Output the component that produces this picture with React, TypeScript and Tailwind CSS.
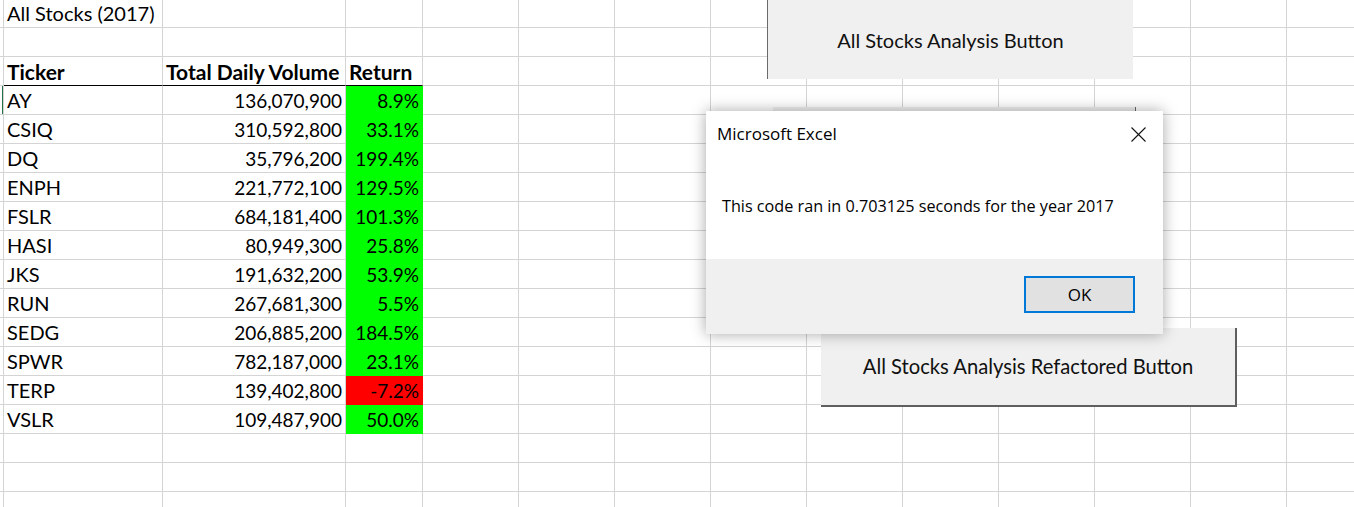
import React from "react";

type DataRow = { t: string; v: string; r: string; red?: boolean };

const DATA: DataRow[] = [
  { t: "AY", v: "136,070,900", r: "8.9%" },
  { t: "CSIQ", v: "310,592,800", r: "33.1%" },
  { t: "DQ", v: "35,796,200", r: "199.4%" },
  { t: "ENPH", v: "221,772,100", r: "129.5%" },
  { t: "FSLR", v: "684,181,400", r: "101.3%" },
  { t: "HASI", v: "80,949,300", r: "25.8%" },
  { t: "JKS", v: "191,632,200", r: "53.9%" },
  { t: "RUN", v: "267,681,300", r: "5.5%" },
  { t: "SEDG", v: "206,885,200", r: "184.5%" },
  { t: "SPWR", v: "782,187,000", r: "23.1%" },
  { t: "TERP", v: "139,402,800", r: "-7.2%", red: true },
  { t: "VSLR", v: "109,487,900", r: "50.0%" },
];

const EXTRA = Array.from({ length: 10 }, (_, i) => i);
const ROWS = Array.from({ length: 18 }, (_, i) => i);

const cellFont = { fontFamily: "Lato, 'Liberation Sans', sans-serif" };
const uiFont = { fontFamily: "'Open Sans', 'Noto Sans', sans-serif" };

function GridRow({ r }: { r: number }) {
  const h = r === 0 ? "h-[28px]" : "h-[29px]";
  const isHeader = r === 2;
  const d = r >= 3 && r <= 14 ? DATA[r - 3] : null;
  const headBorder = isHeader ? "border-b-black" : "";
  const cBg = d ? (d.red ? "bg-[#ff0000] border-[#ff0000]" : "bg-[#00ff00] border-[#00ff00]") : "border-[#d4d4d4]";
  return (
    <div className={`flex shrink-0 ${h}`}>
      <div className={`relative w-[4px] shrink-0 border-r border-b border-[#d4d4d4] ${h}`}>
        {r === 3 && <div className="absolute left-[2px] top-0 bottom-0 w-[1px] bg-[#217346]" />}
      </div>
      <div
        className={`w-[159px] shrink-0 border-r border-b border-[#d4d4d4] ${headBorder} flex items-end pl-[3px] pb-[2px] whitespace-nowrap overflow-visible relative z-[1] ${isHeader ? "font-bold text-[21px]" : "text-[20px]"}`}
      >
        <span className="leading-[23px]">
          {r === 0 ? "All Stocks (2017)" : isHeader ? "Ticker" : d ? d.t : ""}
        </span>
      </div>
      <div
        className={`w-[183px] shrink-0 border-r border-b border-[#d4d4d4] ${headBorder} flex items-end ${isHeader ? "justify-start pl-[3px] font-bold text-[21px]" : "justify-end pr-[3px] text-[19px]"} pb-[2px] whitespace-nowrap`}
      >
        <span className="leading-[23px]">{isHeader ? "Total Daily Volume" : d ? d.v : ""}</span>
      </div>
      <div
        className={`w-[77px] shrink-0 border-r border-b ${cBg} ${headBorder} flex items-end ${isHeader ? "justify-start pl-[3px] font-bold text-[21px]" : "justify-end pr-[3px] text-[19px]"} pb-[2px] whitespace-nowrap`}
      >
        <span className="leading-[23px]">{isHeader ? "Return" : d ? d.r : ""}</span>
      </div>
      {EXTRA.map((i) => (
        <div key={i} className="w-[96px] shrink-0 border-r border-b border-[#d4d4d4]" />
      ))}
    </div>
  );
}

export default function App() {
  return (
    <div className="relative w-[1354px] h-[507px] overflow-hidden bg-white text-black">
      <div className="flex flex-col" style={cellFont}>
        {ROWS.map((r) => (
          <GridRow key={r} r={r} />
        ))}
      </div>

      {/* Button 1 */}
      <div
        className="absolute left-[767px] top-0 w-[366px] h-[79px] bg-[#f0f0f0] border-l border-[#6b6b6b] flex items-center justify-center text-[20px] text-[#111]"
        style={cellFont}
      >
        All Stocks Analysis Button
      </div>

      {/* Button 2 (mostly hidden) */}
      <div className="absolute left-[773px] top-[107px] w-[363px] h-[80px] bg-[#f0f0f0] border-r border-[#6b6b6b]" />

      {/* Button 3 */}
      <div
        className="absolute left-[821px] top-[328px] w-[416px] h-[79px] bg-[#f0f0f0] border-r-2 border-b-2 border-[#5f5f5f] flex items-center justify-center text-[20.2px] text-[#111]"
        style={cellFont}
      >
        All Stocks Analysis Refactored Button
      </div>

      {/* Dialog */}
      <div
        className="absolute left-[706px] top-[111px] w-[457px] h-[223px] bg-white shadow-[0_0_14px_rgba(0,0,0,0.35)] flex flex-col text-[17px] text-black"
        style={uiFont}
      >
        <div className="h-[148px] flex flex-col">
          <div className="flex items-center justify-between pl-[11px] pr-[17px] pt-[11px]">
            <span className="leading-[24px]">Microsoft Excel</span>
            <svg width="15" height="15" viewBox="0 0 15 15">
              <path d="M0.5 0.5 L14.5 14.5 M14.5 0.5 L0.5 14.5" stroke="#111" strokeWidth="1.1" fill="none" />
            </svg>
          </div>
          <div className="pl-[16px] mt-[48px] leading-[24px] whitespace-nowrap text-[16.2px]">
            This code ran in 0.703125 seconds for the year 2017
          </div>
        </div>
        <div className="flex-1 bg-[#f0f0f0] flex justify-end items-start pt-[17px] pr-[28px]">
          <div className="w-[111px] h-[37px] border-2 border-[#0078d7] bg-[#e1e1e1] flex items-center justify-center leading-[24px]">
            OK
          </div>
        </div>
      </div>
    </div>
  );
}
